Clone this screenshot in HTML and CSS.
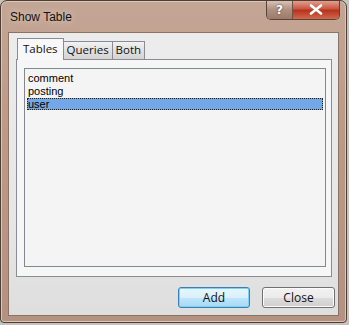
FILE: index.html
```html
<!DOCTYPE html>
<html lang="en">
<head>
  <meta charset="UTF-8" />
  <title>Show Table</title>
  <link rel="stylesheet" href="styles.css">
</head>
<body>
  <div class="window">
    <div class="titlebar">
      <span class="title">Show Table</span>
      <div class="caption-btns">
        <button class="cap-btn help">?</button>
        <button class="cap-btn close">
          <svg width="14" height="11" viewBox="0 0 14 11">
            <path d="M2 1.5 L12 9.5 M12 1.5 L2 9.5" stroke="#fff" stroke-width="2.6" stroke-linecap="round"/>
          </svg>
        </button>
      </div>
    </div>
    <div class="client">
      <div class="tabs">
        <div class="tab active">Tables</div>
        <div class="tab">Queries</div>
        <div class="tab">Both</div>
      </div>
      <div class="panel">
        <ul class="listbox">
          <li>comment</li>
          <li>posting</li>
          <li class="selected">user</li>
        </ul>
      </div>
      <div class="actions">
        <button class="btn default">Add</button>
        <button class="btn">Close</button>
      </div>
    </div>
  </div>
</body>
</html>
```

FILE: styles.css
```css
body {
  margin: 0;
  background: #c8c2bc;
  font-family: "Open Sans", "DejaVu Sans", sans-serif;
}
.window {
  width: 347px;
  height: 323px;
  border: 1px solid #4e3f36;
  border-radius: 7px 7px 4px 4px;
  background: linear-gradient(to bottom, #c4a696, #bb9a86 40%, #b39282);
  box-shadow: inset 0 0 0 1px #dcc6b6;
  display: flex;
  flex-direction: column;
  padding: 0 7px 7px 7px;
  box-sizing: border-box;
  overflow: hidden;
}
.titlebar {
  height: 31px;
  display: flex;
  justify-content: space-between;
  align-items: flex-start;
  flex-shrink: 0;
}
.title {
  font-family: "Liberation Sans", Arial, sans-serif;
  font-size: 12px;
  color: #111;
  margin-top: 9px;
  margin-left: 2px;
  text-shadow: 0 0 6px #e8d8cc;
}
.caption-btns {
  display: flex;
  margin-top: -1px;
  margin-right: -1px;
  border: 1px solid #5a4438;
  border-top: none;
  border-radius: 0 0 5px 5px;
  overflow: hidden;
}
.cap-btn {
  height: 19px;
  border: none;
  padding: 0;
  display: flex;
  align-items: center;
  justify-content: center;
  font-family: "DejaVu Sans", sans-serif;
  font-weight: bold;
}
.help {
  width: 26px;
  background: linear-gradient(to bottom, #dcc8bc, #b09080 50%, #9c7a68);
  color: #fff;
  font-size: 12px;
  text-shadow: 0 0 2px #333;
  border-right: 1px solid #6e5446;
}
.close {
  width: 46px;
  background: linear-gradient(to bottom, #e8a898, #c95a45 45%, #b8331f 55%, #d06a4c);
}
.client {
  flex: 1;
  background: linear-gradient(to bottom, #ececec, #e6e6e6 70%, #dedede);
  border: 1px solid #8a7264;
  display: flex;
  flex-direction: column;
  padding: 6px 6px 7px 7px;
}
.tabs {
  display: flex;
  align-items: flex-end;
  height: 20px;
  margin-left: 1px;
  position: relative;
  z-index: 1;
}
.tab {
  font-size: 11.5px;
  color: #111;
  padding: 0 3px;
  height: 17px;
  line-height: 16px;
  border: 1px solid #898c95;
  border-bottom: none;
  background: linear-gradient(to bottom, #f2f2f2, #e0e0e0 50%, #d4d4d4);
  margin-left: -1px;
}
.tab.active {
  height: 21px;
  line-height: 19px;
  padding: 0 5px;
  background: #f8f8f8;
  margin-bottom: -1px;
  margin-left: 0;
}
.panel {
  height: 218px;
  border: 1px solid #898c95;
  background: #f6f6f6;
  padding: 8px 5px 9px 7px;
  box-sizing: border-box;
}
.listbox {
  list-style: none;
  margin: 0;
  height: 100%;
  box-sizing: border-box;
  border: 1px solid #828790;
  background: #f4f4f4;
  padding: 3px 2px;
  font-family: "Liberation Sans", Arial, sans-serif;
  font-size: 11px;
}
.listbox li {
  height: 12.5px;
  line-height: 12.5px;
  padding-left: 1px;
  color: #000;
}
.listbox li.selected {
  margin-top: 0.5px;
  background: #72a8ea;
  outline: 1px dotted #222;
  outline-offset: -1px;
}
.actions {
  display: flex;
  justify-content: flex-end;
  gap: 12px;
  margin-top: 10px;
  margin-right: -3px;
}
.btn {
  width: 73px;
  height: 21px;
  font-family: inherit;
  font-size: 12px;
  color: #111;
  border: 1px solid #707070;
  border-radius: 3px;
  background: linear-gradient(to bottom, #f2f2f2, #ebebeb 50%, #dddddd 51%, #cfcfcf);
  box-shadow: inset 0 0 0 1px #fbfbfb;
  padding: 0;
}
.btn.default {
  width: 72px;
  border-color: #3c7fb1;
  box-shadow: inset 0 0 0 1px #7cd2f2;
  background: linear-gradient(to bottom, #eaf6fd, #d9f0fc 50%, #bee6fd 51%, #a7d9f5);
}
```
